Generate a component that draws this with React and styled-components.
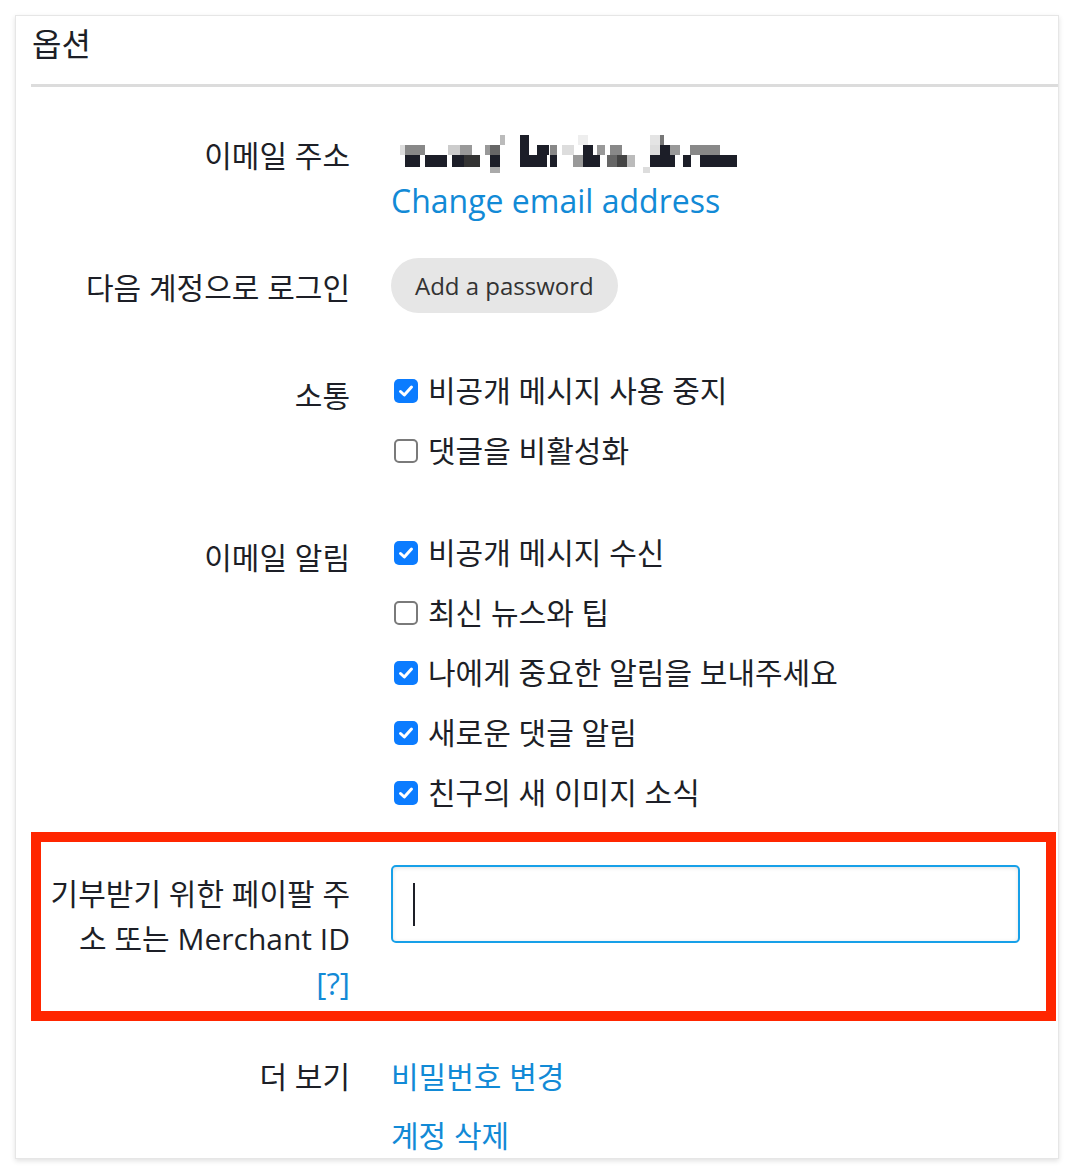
import React from 'react';
import styled, {createGlobalStyle} from 'styled-components';

const GlobalStyle = createGlobalStyle`
  body {
    margin: 0;
    background: #ffffff;
    font-family: 'Open Sans', 'Noto Sans CJK KR', sans-serif;
    color: #1d1f27;
    -webkit-font-smoothing: antialiased;
  }
`;

const Page = styled.div`
  padding: 15px;
`;

const Card = styled.section`
  border: 1px solid #e6e6e6;
  box-shadow: 0 2px 5px rgba(0, 0, 0, 0.12);
  background: #fff;
`;

const Title = styled.h2`
  margin: 0;
  padding: 5px 16px 0;
  font-size: 32px;
  font-weight: 400;
  line-height: 45px;
`;

const Divider = styled.div`
  height: 3px;
  margin: 18px 0 0 15px;
  background: #dcdcdc;
`;

const Body = styled.div`
  padding: 0 2px 0 15px;
`;

const Row = styled.div`
  display: grid;
  grid-template-columns: 309px 1fr;
  column-gap: 41px;
  margin-top: ${p => p.$top}px;
  border: 10px solid ${p => (p.$highlight ? '#ff2600' : 'transparent')};
  border-top-width: ${p => (p.$highlight ? 10 : 0)}px;
  border-bottom-width: ${p => (p.$highlight ? 10 : 0)}px;
  border-right-width: ${p => (p.$highlight ? 10 : 0)}px;
  padding: ${p => (p.$highlight ? '23px 0 5.5px' : '0')};
`;

const Label = styled.div`
  padding-top: ${p => p.$offset || 0}px;
  text-align: right;
  font-size: 30px;
  line-height: 45px;
`;

const HelpLink = styled.a`
  display: block;
  color: #128ad6;
  font-size: 31px;
  text-decoration: none;
`;

const Stack = styled.div`
  display: flex;
  flex-direction: column;
  align-items: flex-start;
  gap: ${p => p.$gap || 0}px;
  padding-top: ${p => p.$offset || 0}px;
`;

const MosaicLine = styled.div`
  height: 45px;
  padding: 2.5px 0 0 9px;
  box-sizing: border-box;
`;

const Link = styled.a`
  color: #128ad6;
  font-size: ${p => (p.$latin ? 32 : 30)}px;
  line-height: 45px;
  text-decoration: none;
  white-space: nowrap;
`;

const PillButton = styled.button`
  height: 55px;
  padding: 0 24px;
  border: none;
  border-radius: 28px;
  background: #e6e6e6;
  color: #333;
  font-family: 'Open Sans', sans-serif;
  font-size: 24px;
`;

const CheckRow = styled.label`
  display: flex;
  align-items: center;
  gap: 10px;
  font-size: 30px;
  line-height: 45px;
  white-space: nowrap;
`;

const Box = styled.span`
  width: 24px;
  height: 24px;
  margin: 2px 0 0 3px;
  box-sizing: border-box;
  border-radius: 5px;
  display: flex;
  align-items: center;
  justify-content: center;
  background: ${p => (p.$checked ? '#0b7cff' : '#fff')};
  border: ${p => (p.$checked ? 'none' : '2px solid #7a7a7a')};
`;

const TextField = styled.div`
  width: 629px;
  height: 78px;
  box-sizing: border-box;
  border: 2px solid #17a0e8;
  border-radius: 5px;
  box-shadow: inset 0 1px 4px rgba(0, 0, 0, 0.12);
  display: flex;
  align-items: center;
  padding-left: 20px;
`;

const Caret = styled.span`
  width: 2px;
  height: 43px;
  background: #1d1f27;
`;

const Check = ({checked, children}) => (
  <CheckRow>
    <Box $checked={checked}>
      {checked && (
        <svg width="16" height="16" viewBox="0 0 16 16">
          <path d="M2.5 8.5 L6.3 12 L13.5 4" fill="none" stroke="#fff" strokeWidth="3" strokeLinecap="round" strokeLinejoin="round" />
        </svg>
      )}
    </Box>
    {children}
  </CheckRow>
);

// redacted email, drawn as a pixel mosaic
const D = '#1c1e28';
const mosaic = [
  [100, 0, 5, 10, '#bbb'], [120, 0, 9, 10, D], [178, 0, 10, 10, '#eee'], [250, 0, 10, 10, '#e4e4e4'], [260, 0, 4, 10, '#777'],
  [0, 10, 5, 10, '#ddd'], [5, 10, 20, 10, '#888'], [48, 10, 12, 10, '#ccc'], [60, 10, 12, 10, '#999'], [85, 10, 5, 10, '#999'],
  [90, 10, 10, 10, '#666'], [120, 10, 9, 10, D], [137, 10, 12, 10, D], [150, 10, 7, 10, '#888'], [162, 10, 12, 10, '#ddd'],
  [183, 10, 10, 10, D], [197, 10, 8, 10, '#999'], [210, 10, 12, 10, '#888'], [250, 10, 10, 10, '#ddd'], [260, 10, 10, 10, D],
  [270, 10, 10, 10, '#999'], [290, 10, 30, 10, '#888'],
  [5, 20, 15, 12, D], [25, 20, 22, 12, D], [52, 20, 12, 12, D], [64, 20, 16, 12, '#333'], [90, 20, 10, 12, D],
  [120, 20, 27, 12, D], [150, 20, 7, 12, D], [173, 20, 10, 12, '#999'], [183, 20, 17, 12, D], [207, 20, 10, 12, '#666'],
  [217, 20, 10, 12, '#444'], [227, 20, 8, 12, '#bbb'], [250, 20, 25, 12, D], [283, 20, 8, 12, D], [300, 20, 37, 12, D],
  [90, 32, 10, 6, '#aaa'], [243, 32, 7, 6, '#ddd'],
];

const Mosaic = () => (
  <MosaicLine>
    <svg width="340" height="40" viewBox="0 0 340 40" shapeRendering="crispEdges">
      {mosaic.map(([x, y, w, h, c], i) => (
        <rect key={i} x={x} y={y} width={w} height={h} fill={c} />
      ))}
    </svg>
  </MosaicLine>
);

const App = () => {
  return (
    <Page>
      <GlobalStyle />
      <Card>
        <Title>옵션</Title>
        <Divider />
        <Body>
          <Row $top={45.5}>
            <Label>이메일 주소</Label>
            <Stack>
              <Mosaic />
              <Link href="#" $latin>Change email address</Link>
            </Stack>
          </Row>

          <Row $top={35.5}>
            <Label $offset={6.5}>다음 계정으로 로그인</Label>
            <Stack>
              <PillButton>Add a password</PillButton>
            </Stack>
          </Row>

          <Row $top={54.5}>
            <Label $offset={5}>소통</Label>
            <Stack $gap={15}>
              <Check checked>비공개 메시지 사용 중지</Check>
              <Check>댓글을 비활성화</Check>
            </Stack>
          </Row>

          <Row $top={57}>
            <Label $offset={5}>이메일 알림</Label>
            <Stack $gap={15}>
              <Check checked>비공개 메시지 수신</Check>
              <Check>최신 뉴스와 팁</Check>
              <Check checked>나에게 중요한 알림을 보내주세요</Check>
              <Check checked>새로운 댓글 알림</Check>
              <Check checked>친구의 새 이미지 소식</Check>
            </Stack>
          </Row>

          <Row $top={17.5} $highlight>
            <Label $offset={5.5}>
              기부받기 위한 페이팔 주소 또는 Merchant ID
              <HelpLink href="#">[?]</HelpLink>
            </Label>
            <Stack>
              <TextField>
                <Caret />
              </TextField>
            </Stack>
          </Row>

          <Row $top={27.5}>
            <Label $offset={5}>더 보기</Label>
            <Stack $gap={14} $offset={5}>
              <Link href="#">비밀번호 변경</Link>
              <Link href="#">계정 삭제</Link>
            </Stack>
          </Row>
        </Body>
      </Card>
    </Page>
  );
};

export default App;
